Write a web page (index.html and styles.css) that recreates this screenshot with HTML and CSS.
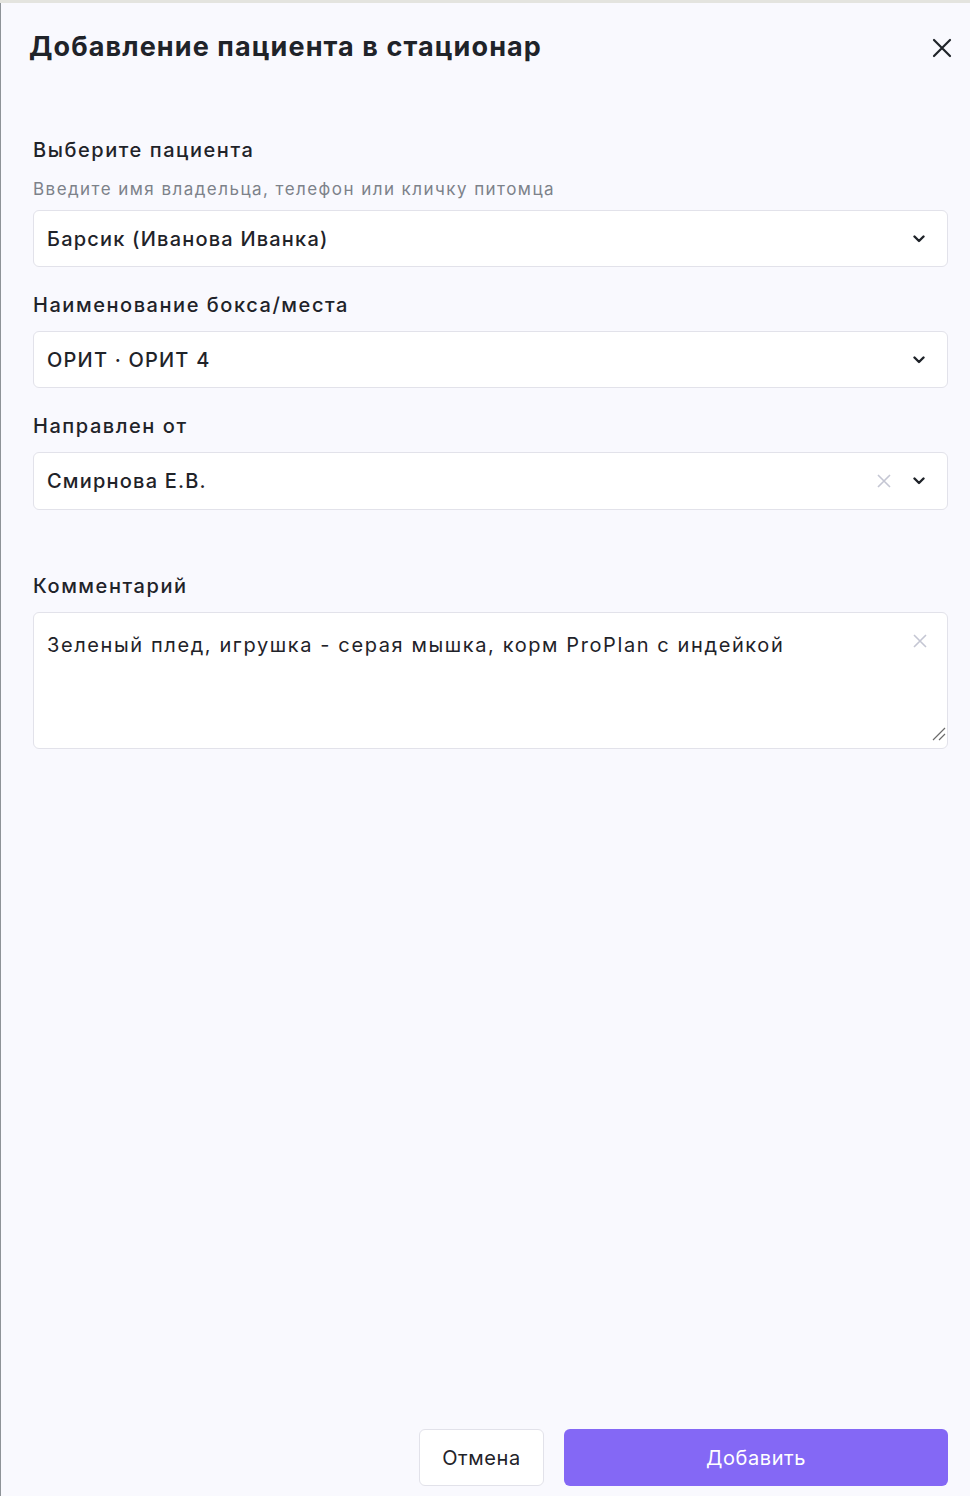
FILE: index.html
```html
<!DOCTYPE html>
<html lang="ru">
<head>
<meta charset="utf-8">
<link rel="stylesheet" href="styles.css">
</head>
<body>
<div class="modal">
  <header class="head">
    <h1 class="title">Добавление пациента в стационар</h1>
    <button class="close" aria-label="Закрыть">
      <svg width="20" height="20" viewBox="0 0 20 20"><path d="M2 2 L18 18 M18 2 L2 18" stroke="#1f2329" stroke-width="2.2" stroke-linecap="round"/></svg>
    </button>
  </header>
  <div class="form">
    <div class="field f1">
      <div class="label">Выберите пациента</div>
      <div class="hint">Введите имя владельца, телефон или кличку питомца</div>
      <div class="select"><span class="val">Барсик (Иванова Иванка)</span>
        <span class="icons"><svg class="chev" width="12" height="8" viewBox="0 0 12 8"><path d="M1.5 1.5 L6 6 L10.5 1.5" fill="none" stroke="#1f2329" stroke-width="2.4" stroke-linecap="round" stroke-linejoin="round"/></svg></span>
      </div>
    </div>
    <div class="field f2">
      <div class="label">Наименование бокса/места</div>
      <div class="select"><span class="val">ОРИТ · ОРИТ 4</span>
        <span class="icons"><svg class="chev" width="12" height="8" viewBox="0 0 12 8"><path d="M1.5 1.5 L6 6 L10.5 1.5" fill="none" stroke="#1f2329" stroke-width="2.4" stroke-linecap="round" stroke-linejoin="round"/></svg></span>
      </div>
    </div>
    <div class="field f3">
      <div class="label">Направлен от</div>
      <div class="select"><span class="val">Смирнова Е.В.</span>
        <span class="icons"><svg class="clear" width="14" height="14" viewBox="0 0 14 14"><path d="M1 1 L13 13 M13 1 L1 13" stroke="#c4c6d3" stroke-width="1.6"/></svg><svg class="chev" width="12" height="8" viewBox="0 0 12 8"><path d="M1.5 1.5 L6 6 L10.5 1.5" fill="none" stroke="#1f2329" stroke-width="2.4" stroke-linecap="round" stroke-linejoin="round"/></svg></span>
      </div>
    </div>
    <div class="field f4">
      <div class="label">Комментарий</div>
      <div class="textarea">
        <span class="val">Зеленый плед, игрушка - серая мышка, корм ProPlan с индейкой</span>
        <svg class="tclear" width="14" height="14" viewBox="0 0 14 14"><path d="M1 1 L13 13 M13 1 L1 13" stroke="#c4c6d3" stroke-width="1.6"/></svg>
        <svg class="grip" width="14" height="14" viewBox="0 0 14 14"><path d="M1 13 L13 1 M7 13 L13 7" stroke="#6b6b6b" stroke-width="1.2"/></svg>
      </div>
    </div>
  </div>
  <footer class="foot">
    <button class="btn cancel">Отмена</button>
    <button class="btn primary">Добавить</button>
  </footer>
</div>
</body>
</html>
```
FILE: styles.css
```css
* { box-sizing: border-box; }
html, body { margin: 0; padding: 0; height: 100%; }
body {
  font-family: Inter, "Noto Sans", sans-serif;
  color: #1f2329;
  background: #e4e4df;
  padding-top: 3px;
}
.modal {
  height: 1493px;
  background: #f9f9fe;
  border-left: 1px solid #8e9398;
  display: flex;
  flex-direction: column;
  padding: 0 22px 10px 32px;
}
.head {
  display: flex;
  align-items: center;
  justify-content: space-between;
  height: 88px;
  margin-left: -4px;
  padding-bottom: 2px;
}
.title {
  margin: 0;
  font-size: 27px;
  font-weight: 700;
  letter-spacing: 1.1px;
}
.close {
  border: 0;
  background: none;
  padding: 0;
  width: 20px;
  height: 20px;
  margin-right: -4px;
  margin-top: 3px;
  cursor: pointer;
}
.form { display: flex; flex-direction: column; flex: 1; padding-top: 47px; }
.label {
  font-size: 20px;
  font-weight: 500;
  line-height: 24px;
  margin-bottom: 14px;
  letter-spacing: 1.55px;
}
.hint {
  font-size: 17px;
  color: #7d828a;
  line-height: 20px;
  margin-top: 3px;
  margin-bottom: 11px;
  letter-spacing: 1.45px;
}
.field { display: flex; flex-direction: column; }
.f2 { margin-top: 26px; }
.f3 { margin-top: 26px; }
.f4 { margin-top: 64px; }
.select, .textarea {
  background: #fff;
  border: 1px solid #e2e2ea;
  border-radius: 6px;
  font-size: 20px;
  font-weight: 500;
  letter-spacing: 1.2px;
}
.select {
  height: 57px;
  display: flex;
  align-items: center;
  justify-content: space-between;
  padding: 0 22px 0 13px;
}
.f3 .select { height: 58px; }
.icons { display: flex; align-items: center; gap: 22px; }
.textarea {
  position: relative;
  height: 137px;
  padding: 19px 13px;
  font-weight: 400;
  line-height: 26px;
  letter-spacing: 1.6px;
}
.tclear { position: absolute; right: 20px; top: 21px; }
.grip { position: absolute; right: 1px; bottom: 7px; }
.foot {
  display: flex;
  justify-content: flex-end;
  gap: 20px;
}
.btn {
  height: 57px;
  border-radius: 6px;
  font-family: inherit;
  font-size: 20px;
  font-weight: 400;
  letter-spacing: 0.6px;
}
.cancel {
  width: 125px;
  background: #fff;
  border: 1px solid #e2e2ea;
  color: #1f2329;
}
.primary {
  width: 384px;
  background: #8468f5;
  border: 0;
  color: #fff;
}
```
